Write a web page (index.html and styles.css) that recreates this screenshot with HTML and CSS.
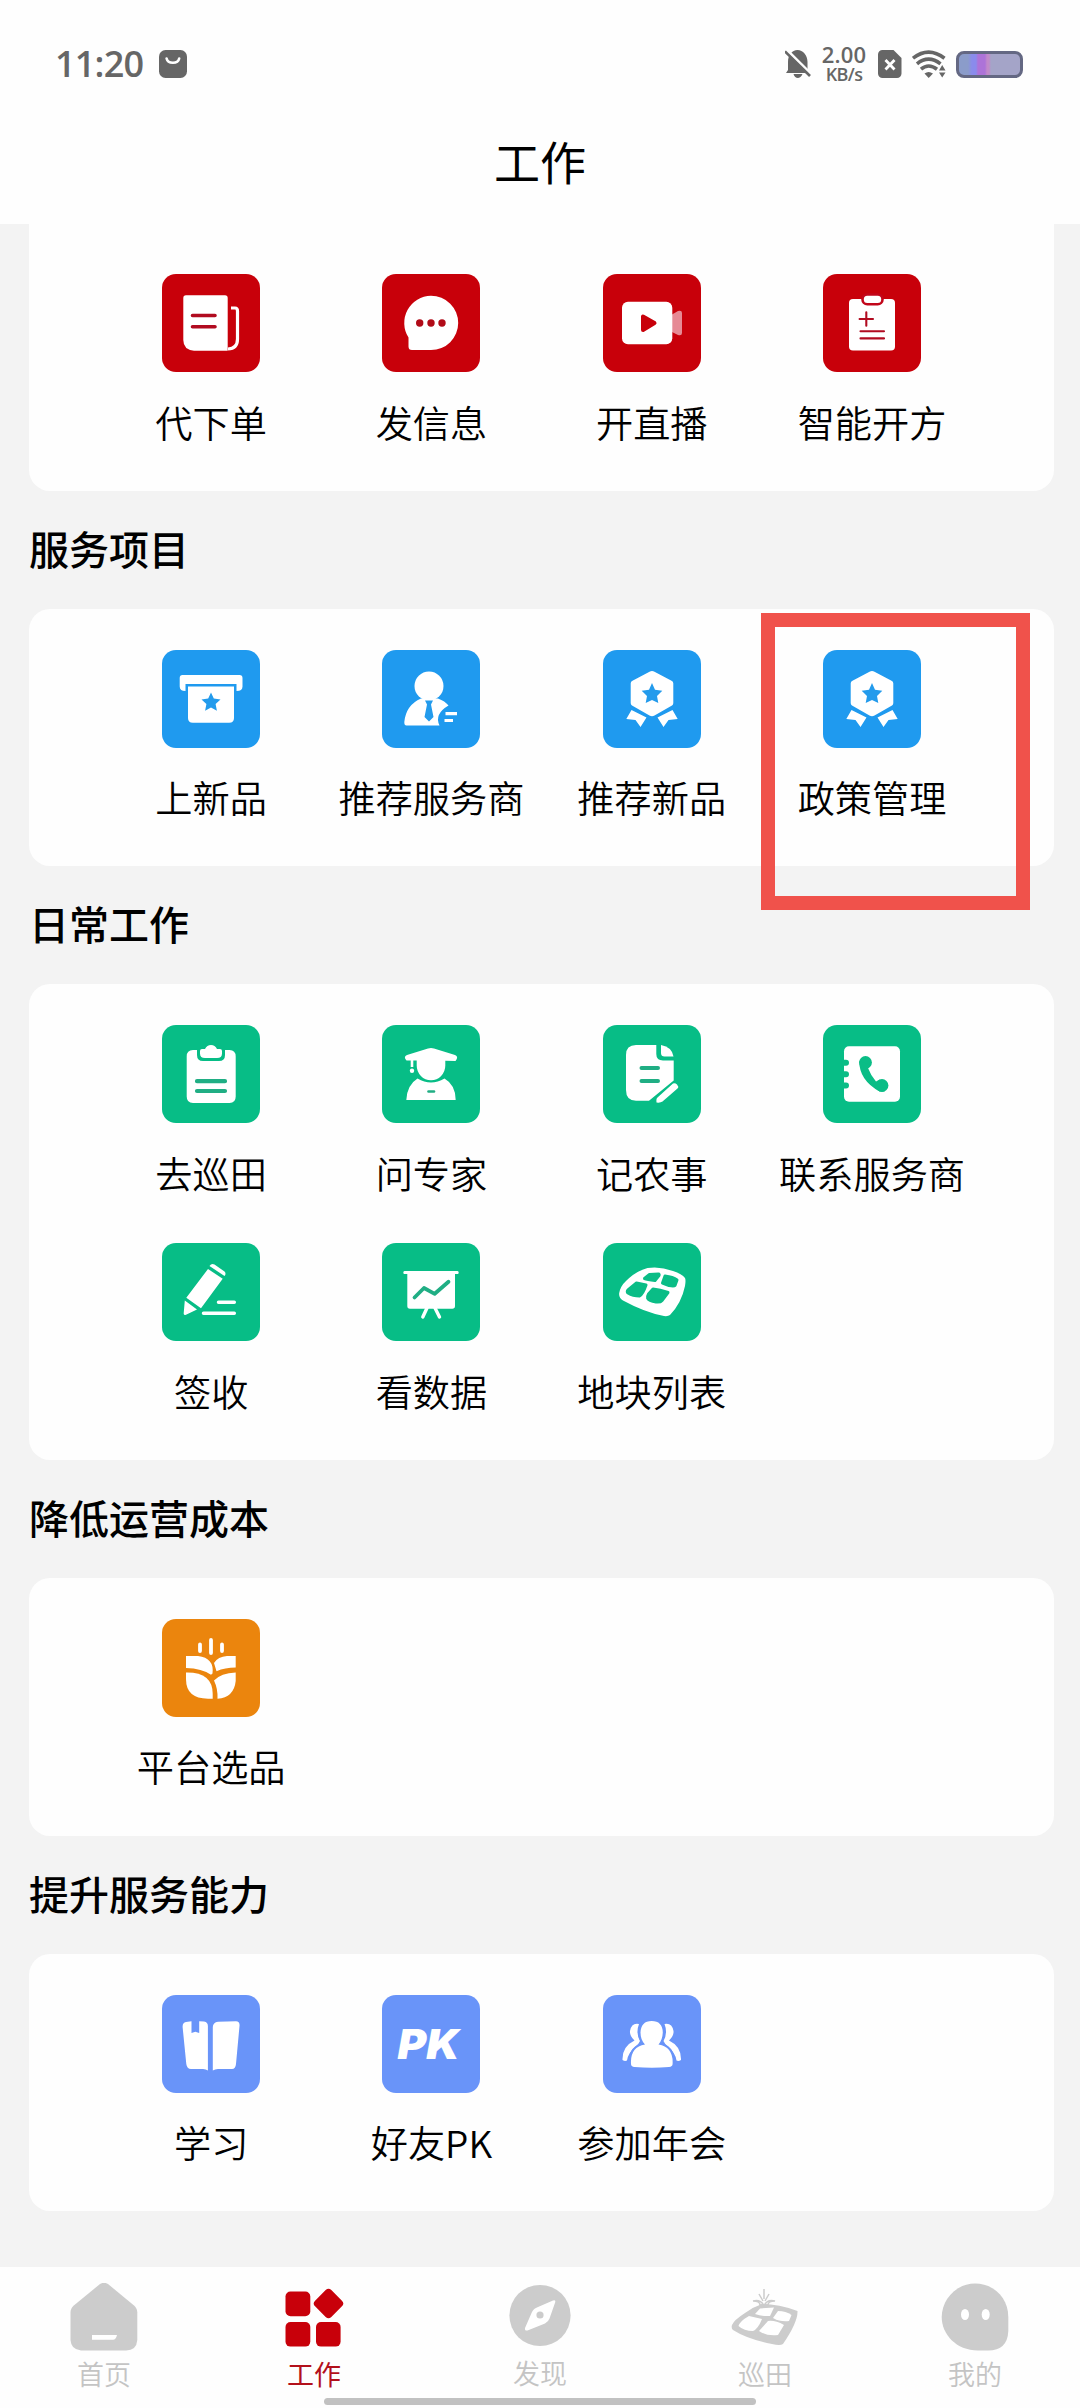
FILE: index.html
```html
<!DOCTYPE html>
<html lang="zh-CN">
<head>
<meta charset="utf-8">
<title>工作</title>
<link rel="stylesheet" href="styles.css">
</head>
<body>
<div class="screen">
  <header class="header">
    <div class="status">
      <span class="clock">11:20</span>
      <svg class="bag" width="28" height="28" viewBox="0 0 28 28"><rect width="28" height="28" rx="6.5" fill="#666"/><path d="M7.6 8.5a6.4 5.2 0 0 0 12.600 0" fill="none" stroke="#fff" stroke-width="2.600" stroke-linecap="round"/></svg>
      <div class="status-right">
        <svg class="bell" width="26" height="28" viewBox="0 0 26 28"><path d="M3 20V12C3 5 7 0 12.500 0S22.500 5 22.500 12v7l2 4H1zM8.500 24h9c-1 2.500-3 4-4.700 4s-3.600-1.500-4.300-4z" fill="#666"/><path d="M1.800 0L27 25" stroke="#fefefe" stroke-width="3"/><path d="M0 1.300l25 24.700" stroke="#666" stroke-width="2.600"/></svg>
        <div class="speed"><span class="rate">2.00</span><span class="unit">KB/s</span></div>
        <svg class="sim" width="24" height="28" viewBox="0 0 24 28"><path d="M4.500 0h11L23.500 8v15.500a4.500 4.500 0 0 1-4.500 4.500H4.500A4.500 4.500 0 0 1 0 23.500v-19A4.500 4.500 0 0 1 4.500 0z" fill="#666"/><path d="M7.500 10l9 9.500M16.500 10l-9 9.500" stroke="#fff" stroke-width="2.800"/></svg>
        <svg class="wifi" width="34" height="28" viewBox="0 0 34 28"><g fill="none" stroke="#666" stroke-width="3.600"><path d="M1 8.200Q16.500-4 32.500 8.200"/><path d="M5 13.800Q16.500 4.500 28.500 13.800"/><path d="M9 19.200Q16.500 12.800 25 19.200"/></g><path d="M12.500 23.500q4-3 8.500 0L16.700 28z" fill="#666"/><path d="M27 20.500l3.200-5.500 3.300 5.500zM27 22.500h6.500l-3.300 5z" fill="#666" stroke="#fefefe" stroke-width="1.500" paint-order="stroke"/></svg>
        <span class="battery"></span>
      </div>
    </div>
    <h1 class="title">工作</h1>
  </header>

  <main class="content">
    <section class="card card-first red">
      <div class="item"><svg class="tile" viewBox="0 0 98 98"><path d="M24 21.300H63q2.700 0 2.700 2.700V76.700H32Q21.300 75.700 21.300 66V24q0-2.700 2.700-2.700z" fill="#fff"/><path d="M69 34h4q2.500 0 2.500 3v28q0 9.500-9.500 10" fill="none" stroke="#fff" stroke-width="3.200"/><path d="M30.500 41.500h22.500M30.500 52.700h22.500" stroke="#b10b20" stroke-width="3.600" stroke-linecap="round"/></svg><span>代下单</span></div>
      <div class="item"><svg class="tile" viewBox="0 0 98 98"><path d="M49 21.700a27.200 27.200 0 1 1 0 54.400H30q-3.500 0-3.500-3.500V63.500A27.200 27.200 0 0 1 49 21.700z" fill="#fff"/><g fill="#b10b18"><circle cx="37.700" cy="49" r="3.700"/><circle cx="49" cy="49" r="3.700"/><circle cx="60" cy="49" r="3.700"/></g></svg><span>发信息</span></div>
      <div class="item"><svg class="tile" viewBox="0 0 98 98"><path d="M69 40.500l6-3.500q4-1 4 2v20q0 3-4 2l-6-3z" fill="#e68a95"/><rect x="19" y="27.700" width="50.300" height="42.600" rx="6" fill="#fff"/><path d="M40 42.500v13.500l11.500-7z" fill="#c8000a" stroke="#c8000a" stroke-width="4" stroke-linejoin="round"/></svg><span>开直播</span></div>
      <div class="item"><svg class="tile" viewBox="0 0 98 98"><rect x="26" y="25" width="46" height="51.500" rx="4" fill="#fff"/><rect x="39.500" y="20.500" width="20" height="9.800" rx="4.800" fill="#fff" stroke="#c2061a" stroke-width="2.600"/><path d="M43.300 38.300v13.400M36.600 45H50M37.500 57.300h23.500M37.500 64.400h23.500" stroke="#b10b20" stroke-width="2.100" stroke-linecap="round"/></svg><span>智能开方</span></div>
    </section>

    <h2 class="heading">服务项目</h2>
    <section class="card blue">
      <div class="item"><svg class="tile" viewBox="0 0 98 98"><path d="M20.500 25h57q3 0 3 3v8.500q0 4.500-6 4.500V34H23.500v7q-5.800 0-5.800-4.500V28q0-3 2.800-3z" fill="#fff"/><path d="M26 36.500h46V68q0 4.800-4.800 4.800H30.800Q26 72.800 26 68z" fill="#fff"/><path d="M49 42.500l2.800 6.100 6.700.8-4.900 4.700 1.300 6.700-5.900-3.300-5.900 3.300 1.300-6.700-4.900-4.700 6.700-.8z" fill="#239bec"/></svg><span>上新品</span></div>
      <div class="item"><svg class="tile" viewBox="0 0 98 98"><circle cx="47" cy="36" r="14.500" fill="#fff"/><path d="M39 48.500H56Q63 51 66.500 55.500Q52 64 57.500 75.500H24.500Q22.200 75.500 22.300 72Q24 55 39 48.500z" fill="#fff"/><path d="M43 50.500h8l-2 4L51.500 67 47 71.500 42.500 67 45 54.500z" fill="#239bec"/><path d="M63.500 63.700h11.500M62.500 70.500h8.500" stroke="#fff" stroke-width="3.200"/></svg><span>推荐服务商</span></div>
      <div class="item"><svg class="tile" viewBox="0 0 98 98"><path id="hex" d="M46.500 21.700q2.500-1.500 5 0L69 31q1.300.8 1.300 2.500V53q0 1.700-1.300 2.500l-17.500 10q-2.500 1.400-5 0L29 55.500q-1.300-.8-1.300-2.500V33.500Q27.700 31.800 29 31zM28.500 60l15 7.500L37.500 77 32.500 70 23.300 69zM69.500 60l-15 7.500L60.500 77 65.500 70 74.700 69z" fill="#fff"/><path d="M49 33l3 6.800 7.300.9-5.300 5.200 1.300 7L49 50l-6.300 2.900 1.300-7-5.300-5.200 7.300-.9z" fill="#239bec"/></svg><span>推荐新品</span></div>
      <div class="item"><svg class="tile" viewBox="0 0 98 98"><use href="#hex"/><path d="M49 33l3 6.800 7.300.9-5.300 5.200 1.300 7L49 50l-6.300 2.900 1.300-7-5.300-5.200 7.300-.9z" fill="#239bec"/></svg><span>政策管理</span></div>
      <div class="highlight"></div>
    </section>

    <h2 class="heading">日常工作</h2>
    <section class="card green">
      <div class="item"><svg class="tile" viewBox="0 0 98 98"><path d="M31 25H35V30Q35 36 41 36H57Q63 36 63 30V25H67.500Q73.700 25 73.700 31.500V71.500Q73.700 78 67.500 78H31Q24.700 78 24.700 71.500V31.500Q24.700 25 31 25z" fill="#fff"/><path d="M38 26q0-2 2-2h3q2-4 6-4t6 4h3q2 0 2 2v2.500q0 4.500-5 4.500H43q-5 0-5-4.500z" fill="#fff"/><path d="M35 56.200h28M35 66h28" stroke="#20ae84" stroke-width="4.200" stroke-linecap="round"/></svg><span>去巡田</span></div>
      <div class="item"><svg class="tile" viewBox="0 0 98 98"><path d="M25 30L46 23.500q3-1 6 0L73 30q4 1.500.5 6L63.300 35.800V40.500a14.300 14.700 0 0 1-28.600 0V35.500H24.500Q21 31.500 25 30z" fill="#fff"/><path d="M30 35v7" stroke="#fff" stroke-width="2.600"/><circle cx="30" cy="45.700" r="2.200" fill="#fff"/><path d="M35.500 53.500Q49 61.500 62.500 53.500Q73.700 60 73.700 75H24.300Q25 60 35.500 53.500z" fill="#fff"/><path d="M46.500 66.500h5.500" stroke="#20ae84" stroke-width="2.600" stroke-linecap="round"/></svg><span>问专家</span></div>
      <div class="item"><svg class="tile" viewBox="0 0 98 98"><path d="M33 20H53.300V29Q53.300 35.500 60 35.500H70.700V55.500L46 75.700H33Q23 75.700 23 65V30Q23 20 33 20z" fill="#fff"/><path d="M58 20Q69 22 70.500 31.500H61.500Q58 31.500 58 28z" fill="#fff"/><path d="M53.500 77.500Q53 73.500 54.500 72.500L70 58.500Q72 57.500 74 59.500Q76 61.500 74.500 63.500L59.500 76.500Q57.500 78 53.500 77.500z" fill="#fff"/><path d="M38.500 43h16.500M38.500 56h16.500" stroke="#20ae84" stroke-width="4" stroke-linecap="round"/></svg><span>记农事</span></div>
      <div class="item"><svg class="tile" viewBox="0 0 98 98"><rect x="21" y="21.300" width="56" height="55.400" rx="5" fill="#fff"/><g fill="#0abd86"><path d="M20 34.800h3a3 3 0 0 1 0 6h-3zM20 46.200h3a3 3 0 0 1 0 6h-3zM20 57.500h3a3 3 0 0 1 0 6h-3z"/><circle cx="42.500" cy="37.500" r="6.400"/><circle cx="59" cy="60.500" r="6.400"/><path d="M36.300 36Q36 55 56.500 66.500L61.500 66.500L57 54.500L53 56.500Q48 51 45 43L48 40z"/></g></svg><span>联系服务商</span></div>
      <div class="item"><svg class="tile" viewBox="0 0 98 98"><path d="M47.500 23q2-3 5-1.500L62.500 28.500q2 2 0 4.500zM46 26L60.700 35.700 39 65.300 24.300 54.700zM22.800 57.500L35 66.500 24 71.700q-2.500 1-2.300-1.500z" fill="#fff"/><path d="M56.500 59.200h15.800M41.500 70.300h30.800" stroke="#fff" stroke-width="3.500" stroke-linecap="round"/></svg><span>签收</span></div>
      <div class="item"><svg class="tile" viewBox="0 0 98 98"><path d="M22.500 28h53q1.200 0 1.200 1.500T75.500 31H73V63q0 2.700-2.700 2.700H28q-2.700 0-2.700-2.700V31H22.500q-1.200 0-1.200-1.500T22.500 28z" fill="#fff"/><path d="M45 65l-4.200 9M53 65l4.500 9" stroke="#fff" stroke-width="3.400" stroke-linecap="round"/><path d="M32.500 54.500L42 45l10.700 5.800L66.500 38.800" fill="none" stroke="#20ae84" stroke-width="3.800" stroke-linecap="round" stroke-linejoin="round"/></svg><span>看数据</span></div>
      <div class="item"><svg class="tile" viewBox="0 0 98 98"><path d="M16.200 50Q17.500 43 23 38Q33 28 44.500 25Q57 23 70 28Q79 31 82 35Q83 37 82 43Q78.500 60 67 72Q65 73.500 61 73Q42 69.500 20 57.500Q15.500 54.500 16.200 50z" fill="#fff"/><g fill="#0abd86" stroke="#0abd86" stroke-width="3" stroke-linejoin="round"><path d="M46.500 31.500L55.500 31Q56.500 31 56 32.500L52 37.500Q44 36.500 41.500 35.500z"/><path d="M62 33Q70 34 74 37L72 42.500Q71 43.500 66 42.500L59.500 40z"/><path d="M33.500 40L43 42Q40 51 36.500 53Q30 53 25 50Q23.500 49 25 47z"/><path d="M50 46Q57 46.500 65 49.500L59 57.500Q57.500 59.500 53 59Q46 58 44.500 55Q44 54 45.500 51z"/></g></svg><span>地块列表</span></div>
    </section>

    <h2 class="heading">降低运营成本</h2>
    <section class="card orange">
      <div class="item"><svg class="tile" viewBox="0 0 98 98"><path d="M38 25.500v6.500M49 21v13M60 25.500v6.500" stroke="#fff" stroke-width="3.800" stroke-linecap="round"/><g fill="#fff"><path d="M24 37h12Q52.500 39 50.500 54.500L49 55.700Q40 49.500 24 49z"/><path d="M73.700 37H65Q56 37.500 52 44L54.500 52.200Q63 48.500 73.700 48.500z"/><path d="M24 53.500Q50.700 53 50.700 75V79.700H46Q24 79.500 24 60z"/><path d="M73.700 53.500Q59 54 52 61.500Q56 70 55.500 79.700Q72 78.500 73.700 62z"/></g></svg><span>平台选品</span></div>
    </section>

    <h2 class="heading">提升服务能力</h2>
    <section class="card periwinkle">
      <div class="item"><svg class="tile" viewBox="0 0 98 98"><g fill="#fff"><path d="M24 27l5.500-.8V38L33.300 36.800L37.200 38V26.300L42 26.500Q45.900 27 45.900 31V75.500Q44 74 41 74H29Q25 74 24.300 69L20.600 32Q20.500 27.500 24 27z"/><path d="M56 26.800L74 26.200Q78 26.500 77.500 31L74 69Q73.500 74 70 74H56Q53 74 50.800 75.500V32Q51 27.500 56 26.800z"/></g></svg><span>学习</span></div>
      <div class="item"><svg class="tile" viewBox="0 0 98 98"><text class="pk" x="15.500" y="64" textLength="62" lengthAdjust="spacingAndGlyphs">PK</text></svg><span>好友PK</span></div>
      <div class="item"><svg class="tile" viewBox="0 0 98 98"><g fill="#fff"><path d="M36 29Q32.500 38 37 46Q35.500 49.500 32.500 51.500Q25 58 24 65.500Q22 66.500 19.500 65Q19 51.500 31.500 45.500Q26.500 41 27 36Q28.500 27.500 36 29z"/><path d="M61.500 29Q65 38 60.500 46Q62 49.500 65 51.500Q72.500 58 73.500 65.500Q75.500 66.500 78 65Q78.500 51.500 66 45.500Q71 41 70.500 36Q69 27.500 61.500 29z"/><path d="M28 69Q27 52 42 49.500Q37.500 45 37.500 37.500Q38 26 48.700 26Q59.500 26 59.800 37.500Q59.500 45 55.500 49.500Q70.500 52 69.600 69Q69.500 71.500 66 72Q49 73.500 31.500 72Q28 71.500 28 69z" stroke="#6994f9" stroke-width="4" paint-order="stroke"/></g></svg><span>参加年会</span></div>
    </section>
  </main>

  <nav class="tabs">
    <div class="tab"><svg width="68" height="68" viewBox="0 0 68 68"><path d="M30 1q4-2.500 8 0L64 22.500q3.300 3 3.300 7V57Q66.500 67.500 56 67.500H11Q1 66.500.5 57V29.500q0-4 3.300-7z" fill="#ccc"/><path d="M22 52h25q-1 4.800-4 4.800H22z" fill="#fff"/></svg><span>首页</span></div>
    <div class="tab active"><svg width="60" height="68" viewBox="0 0 60 68"><g fill="#c8000a"><rect x="1.500" y="8.500" width="24.800" height="24.700" rx="5"/><rect x="1.500" y="39" width="24.800" height="24.600" rx="5"/><rect x="32" y="39" width="24.600" height="24.600" rx="5"/><rect x="33" y="9" width="23" height="23" rx="4" transform="rotate(45 44.500 20.500)"/></g></svg><span>工作</span></div>
    <div class="tab discover"><svg width="62" height="68" viewBox="0 0 62 68"><circle cx="31" cy="32.500" r="30.600" fill="#ccc"/><path d="M16 45L23 29Q24.500 25.500 29 24L44 17.500Q46.800 16.500 46.300 19L40.500 35.500Q39.500 38.500 36 40.500L18.500 47.500Q15.500 48 16 45z" fill="#fff"/><circle cx="31" cy="32" r="3.600" fill="#ccc"/></svg><span>发现</span></div>
    <div class="tab"><svg width="68" height="68" viewBox="0 0 68 68"><path d="M1 42Q3 37 14 30Q22 24 31 21Q48 21 66.500 28Q67 39 52 61Q49 63 41 61Q16 56 2 47Q0 45 1 42z" fill="#ccc"/><g fill="#fff"><path d="M29 25.500L43 24.500 39 33Q31 33.500 24 31z"/><path d="M47 28Q55 28 60.500 32L58 38Q49 39 42 35z"/><path d="M18 33L31 36Q27 46 22 48Q13 48 7.500 43Q9 38 18 33z"/><path d="M37 38Q44 37 53 42L47 52Q36 53.500 28 48z"/></g><path d="M33 6v10M28 11l4 7M38 11l-4 7M22 18q8-2 11 5q3-7 11-5q-7 0-7 4h-8q0-4-7-4" fill="none" stroke="#ccc" stroke-width="1.500"/></svg><span>巡田</span></div>
    <div class="tab"><svg width="68" height="68" viewBox="0 0 68 68"><path d="M34 .5C53 .5 67.300 15 67.300 34V48Q66.500 67.500 47 67.500H37C15 67.500.7 51 .7 34S15 .5 34 .5z" fill="#ccc"/><ellipse cx="24" cy="31.500" rx="4" ry="5.600" fill="#fff"/><ellipse cx="44.700" cy="31.500" rx="4" ry="5.600" fill="#fff"/></svg><span>我的</span></div>
    <div class="home-bar"></div>
  </nav>
</div>
</body>
</html>
```

FILE: styles.css
```css
* {
  box-sizing: border-box;
}

body {
  margin: 0;
  background: #f3f3f3;
  color: #000;
  font-family: "Noto Sans CJK SC", "Noto Sans", sans-serif;
}

.screen {
  display: flex;
  flex-direction: column;
  width: 1080px;
  height: 2408px;
  overflow: hidden;
}

.header {
  flex: none;
  height: 224px;
  background: #fefefe;
}

.status {
  display: flex;
  align-items: center;
  height: 128px;
  padding: 0 57px 0 55px;
  color: #666;
  font-family: "Open Sans", "Noto Sans", sans-serif;
}

.clock {
  width: 104px;
  font-size: 36px;
  font-weight: 600;
  line-height: 40px;
  letter-spacing: -0.8px;
  white-space: nowrap;
}

.status-right {
  display: flex;
  align-items: center;
  margin-left: auto;
}

.speed {
  display: flex;
  flex-direction: column;
  align-items: center;
  width: 46px;
  margin: 0 11px 0 10px;
  font-weight: 600;
}

.rate {
  font-size: 22px;
  line-height: 20px;
  letter-spacing: 0.2px;
}

.unit {
  font-size: 18px;
  line-height: 21px;
  letter-spacing: -0.6px;
}

.wifi {
  margin: 0 10px 0 10px;
}

.battery {
  width: 67px;
  height: 27px;
  border: 3px solid #646883;
  border-radius: 8px;
  background: linear-gradient(90deg, #8b9cca 0 9px, #8a8bec 13px 17px, #ad73d8 19px 26px, #c18aca 28px 30px, #a4a4c8 32px);
}

.title {
  margin: 0;
  font-size: 46px;
  font-weight: 400;
  line-height: 65px;
  text-align: center;
}

.content {
  flex: 1;
  padding: 0 26.500px 0 29px;
}

.card {
  position: relative;
  display: grid;
  grid-template-columns: repeat(4, 220.300px);
  grid-auto-rows: 218px;
  padding: 41px 0 0 72px;
  height: 257.600px;
  border-radius: 21px;
  background: #fefefe;
}

.card-first {
  height: 266.800px;
  padding-top: 50px;
  border-radius: 0 0 21px 21px;
}

.card.green {
  height: 475.600px;
}

.heading {
  margin: 0;
  height: 118px;
  font-size: 40px;
  font-weight: 500;
  line-height: 115px;
}

.item {
  display: flex;
  flex-direction: column;
  align-items: center;
  font-size: 37.200px;
  font-weight: 350;
  line-height: 50px;
  white-space: nowrap;
}

.tile {
  flex: none;
  width: 98px;
  height: 98px;
  margin-bottom: 24.500px;
  border-radius: 14px;
}

.red .tile { background: #c8000a; }
.blue .tile { background: #1f9aef; }
.green .tile { background: #07bd86; }
.orange .tile { background: #eb850d; }
.periwinkle .tile { background: #6994f9; }

.pk {
  fill: #fff;
  font-family: Inter, sans-serif;
  font-size: 41px;
  font-style: italic;
  font-weight: 900;
}

.highlight {
  position: absolute;
  left: 732px;
  top: 4px;
  width: 269px;
  height: 297px;
  border: 14px solid #f0524b;
}

.tabs {
  position: relative;
  flex: none;
  display: grid;
  grid-template-columns: 208px 212px 240px 210px 210px;
  height: 141px;
  padding-top: 16px;
  background: #fefefe;
}

.tab {
  display: flex;
  flex-direction: column;
  align-items: center;
  gap: 3px;
  color: #c4c4c4;
  font-size: 27px;
  font-weight: 350;
  line-height: 40px;
}

.tab.active {
  color: #b3101b;
  font-weight: 400;
}

.tab.discover {
  gap: 2px;
}

.home-bar {
  position: absolute;
  left: 324px;
  bottom: 3px;
  width: 432px;
  height: 7px;
  border-radius: 4px;
  background: #c1c1c1;
}
```
